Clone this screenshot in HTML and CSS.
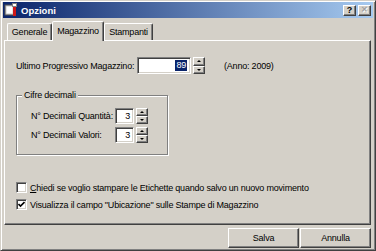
FILE: index.html
```html
<!DOCTYPE html>
<html>
<head>
  <title>Opzioni</title>
  <link rel="stylesheet" href="styles.css">
</head>
<body>
  <div class="window">
    <div class="titlebar">
      <svg class="app-icon" width="14" height="14" viewBox="0 0 14 14">
        <rect x="1" y="2" width="9" height="10" fill="#c8c8c8" stroke="#505050" stroke-width="1"/>
        <rect x="2.5" y="3.5" width="6" height="7" fill="#ffffff"/>
        <rect x="9" y="1" width="3" height="12" fill="#d01818"/>
        <rect x="8.5" y="0.5" width="4" height="3" fill="#ffffff" stroke="#808080" stroke-width="1"/>
      </svg>
      <span class="title">Opzioni</span>
      <div class="caption-buttons">
        <span class="cap-btn help">?</span>
        <span class="cap-btn close">&#x2715;</span>
      </div>
    </div>

    <div class="client">
      <div class="tabs">
        <div class="tab tab-generale">Generale</div>
        <div class="tab tab-magazzino active">Magazzino</div>
        <div class="tab tab-stampanti">Stampanti</div>
      </div>

      <div class="panel">
        <div class="row row-prog">
          <label class="lbl-prog">Ultimo Progressivo Magazzino:</label>
          <div class="field field-wide"><span class="sel">89</span></div>
          <div class="spin">
            <span class="spin-btn"><i class="arrow up"></i></span>
            <span class="spin-btn"><i class="arrow down"></i></span>
          </div>
          <span class="anno">(Anno: 2009)</span>
        </div>

        <div class="group">
          <span class="group-title">Cifre decimali</span>
          <div class="row">
            <label class="lbl-dec">N° Decimali Quantità:</label>
            <div class="field field-small">3</div>
            <div class="spin">
              <span class="spin-btn"><i class="arrow up"></i></span>
              <span class="spin-btn"><i class="arrow down"></i></span>
            </div>
          </div>
          <div class="row">
            <label class="lbl-dec">N° Decimali Valori:</label>
            <div class="field field-small">3</div>
            <div class="spin">
              <span class="spin-btn"><i class="arrow up"></i></span>
              <span class="spin-btn"><i class="arrow down"></i></span>
            </div>
          </div>
        </div>

        <div class="checks">
          <label class="check">
            <span class="box"></span>
            <span><u>C</u>hiedi se voglio stampare le Etichette quando salvo un nuovo movimento</span>
          </label>
          <label class="check">
            <span class="box">
              <svg width="7" height="7" viewBox="0 0 7 7"><polyline points="0.5,3 2.5,5 6.5,1" fill="none" stroke="#000" stroke-width="1.6"/></svg>
            </span>
            <span>Visualizza il campo "Ubicazione" sulle Stampe di Magazzino</span>
          </label>
        </div>
      </div>

      <div class="buttons">
        <button class="btn">Salva</button>
        <button class="btn">Annulla</button>
      </div>
    </div>
  </div>
</body>
</html>
```

FILE: styles.css
```css
* {
  box-sizing: border-box;
}

body {
  margin: 0;
  font-family: "Liberation Sans", Arial, sans-serif;
  font-size: 9px;
  letter-spacing: -0.2px;
  color: #000;
}

.window {
  width: 376px;
  height: 251px;
  background-color: #d4d0c8;
  border: 1px solid;
  border-color: #d4d0c8 #404040 #404040 #d4d0c8;
  box-shadow: inset 1px 1px 0 #fff, inset -1px -1px 0 #808080;
  padding: 1px 2px 1px 2px;
  display: flex;
  flex-direction: column;
}

/* title bar */
.titlebar {
  height: 16px;
  display: flex;
  align-items: center;
  background: linear-gradient(to right, #0a246a, #a6caf0);
  padding-left: 1px;
}

.app-icon {
  display: block;
}

.title {
  margin-left: 3px;
  color: #fff;
  font-weight: bold;
  font-size: 9.5px;
  letter-spacing: 0;
}

.caption-buttons {
  margin-left: auto;
  margin-right: 2px;
  display: flex;
  gap: 2px;
}

.cap-btn {
  width: 13px;
  height: 11px;
  background-color: #d4d0c8;
  border: 1px solid;
  border-color: #fff #404040 #404040 #fff;
  box-shadow: inset -1px -1px 0 #808080;
  display: flex;
  align-items: center;
  justify-content: center;
  font-weight: bold;
  font-size: 9px;
  letter-spacing: 0;
  line-height: 1;
}

.cap-btn.close {
  color: #a0a0a0;
  font-size: 8px;
  text-shadow: 1px 1px 0 #fff;
}

/* tabs */
.client {
  flex: 1;
  display: flex;
  flex-direction: column;
  padding: 0 2px 0 1px;
}

.tabs {
  margin-top: 3px;
  height: 19px;
  display: flex;
  align-items: flex-end;
  padding-left: 3px;
  position: relative;
  z-index: 1;
}

.tab {
  height: 17px;
  border: 1px solid;
  border-bottom: none;
  border-color: #fff #404040 transparent #fff;
  border-radius: 2px 2px 0 0;
  box-shadow: inset -1px 0 0 #808080;
  text-align: center;
  line-height: 16px;
}

.tab-generale {
  width: 45px;
}

.tab-magazzino {
  width: 52px;
}

.tab-stampanti {
  width: 49px;
}

.tab.active {
  height: 20px;
  margin-bottom: -1px;
  background-color: #d4d0c8;
  line-height: 18px;
}

/* panel */
.panel {
  height: 185px;
  border: 1px solid;
  border-color: #fff #404040 #404040 #fff;
  box-shadow: inset -1px -1px 0 #808080;
  padding: 16px 0 0 11px;
}

.row {
  display: flex;
  align-items: center;
}

.row-prog {
  height: 17px;
}

.lbl-prog {
  width: 121px;
}

.field {
  background-color: #fff;
  border: 1px solid;
  border-color: #808080 #fff #fff #808080;
  box-shadow: inset 1px 1px 0 #404040, inset -1px -1px 0 #d4d0c8;
  display: flex;
  align-items: center;
  justify-content: flex-end;
  padding-right: 3px;
}

.field-wide {
  width: 54px;
  height: 17px;
}

.field-small {
  width: 19px;
  height: 16px;
}

.sel {
  background-color: #0a246a;
  color: #fff;
  padding: 0 1px;
  line-height: 11px;
}

.spin {
  margin-left: 2px;
  width: 12px;
  display: flex;
  flex-direction: column;
}

.row-prog .spin {
  height: 17px;
}

.group .spin {
  height: 16px;
}

.spin-btn {
  flex: 1;
  background-color: #d4d0c8;
  border: 1px solid;
  border-color: #fff #404040 #404040 #fff;
  box-shadow: inset -1px -1px 0 #808080;
  display: flex;
  align-items: center;
  justify-content: center;
}

.arrow {
  width: 0;
  height: 0;
  border-left: 2px solid transparent;
  border-right: 2px solid transparent;
}

.arrow.up {
  border-bottom: 2px solid #000;
}

.arrow.down {
  border-top: 2px solid #000;
}

.anno {
  margin-left: 19px;
}

/* group box */
.group {
  position: relative;
  margin-top: 21px;
  width: 152px;
  height: 60px;
  border: 1px solid #808080;
  box-shadow: inset 1px 1px 0 #fff, 1px 1px 0 #fff;
  padding: 12px 0 0 14px;
  display: flex;
  flex-direction: column;
  gap: 3px;
}

.group-title {
  position: absolute;
  top: -7px;
  left: 5px;
  padding: 0 2px;
  background-color: #d4d0c8;
  line-height: 12px;
}

.lbl-dec {
  width: 84px;
}

/* checkboxes */
.checks {
  margin-top: 27px;
  display: flex;
  flex-direction: column;
  gap: 6px;
}

.check {
  display: flex;
  align-items: center;
  height: 11px;
}

.box {
  width: 11px;
  height: 11px;
  margin-right: 3px;
  background-color: #fff;
  border: 1px solid;
  border-color: #808080 #fff #fff #808080;
  box-shadow: inset 1px 1px 0 #404040, inset -1px -1px 0 #d4d0c8;
  display: flex;
  align-items: center;
  justify-content: center;
}

.box svg {
  display: block;
}

/* buttons */
.buttons {
  margin-top: 3px;
  display: flex;
  justify-content: flex-end;
  gap: 1px;
}

.btn {
  width: 71px;
  height: 20px;
  margin: 0;
  padding: 0;
  font-family: inherit;
  font-size: 9px;
  letter-spacing: -0.2px;
  background-color: #d4d0c8;
  border: 1px solid;
  border-color: #fff #404040 #404040 #fff;
  box-shadow: inset -1px -1px 0 #808080;
  color: #000;
}
```
